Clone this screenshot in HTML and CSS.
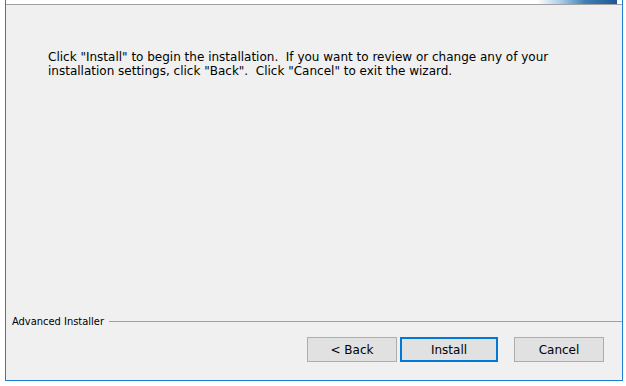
FILE: index.html
```html
<!DOCTYPE html>
<html lang="en">
<head>
  <meta charset="UTF-8">
  <title>Setup</title>
  <link rel="stylesheet" href="styles.css">
</head>
<body>
  <div class="window">
    <div class="header">
      <div class="banner"></div>
    </div>
    <div class="content">
      <p class="message">Click "Install" to begin the installation.&nbsp; If you want to review or change any of your<br>installation settings, click "Back".&nbsp; Click "Cancel" to exit the wizard.</p>
    </div>
    <div class="footer">
      <div class="brand">
        <span>Advanced Installer</span>
        <div class="rule"></div>
      </div>
      <div class="buttons">
        <button class="btn">&lt; Back</button>
        <button class="btn btn-default">Install</button>
        <button class="btn btn-cancel">Cancel</button>
      </div>
    </div>
  </div>
</body>
</html>
```

FILE: styles.css
```css
* {
  box-sizing: border-box;
}
body {
  margin: 0;
  background: #ffffff;
  font-family: "DejaVu Sans", "Liberation Sans", sans-serif;
  font-size: 12px;
  color: #000;
}
.window {
  margin-left: 5px;
  width: 618px;
  height: 381px;
  border-left: 1px solid #1b7fd6;
  border-right: 1px solid #1b7fd6;
  border-bottom: 1px solid #1b7fd6;
  background: #f0f0f0;
  display: flex;
  flex-direction: column;
}
.header {
  height: 5px;
  background: #ffffff;
  border-bottom: 1px solid #a0a0a0;
  display: flex;
  justify-content: flex-end;
}
.banner {
  width: 80px;
  height: 4px;
  margin-right: 5px;
  background: linear-gradient(90deg, #ffffff 0%, #a9cde6 30%, #3f7fb5 60%, #1d5a94 100%);
}
.content {
  flex: 1;
  padding: 45px 20px 0 42px;
}
.message {
  margin: 0;
  line-height: 14px;
}
.footer {
  padding-bottom: 18px;
}
.brand {
  display: flex;
  align-items: center;
  gap: 5px;
  padding-left: 6px;
  height: 13px;
  font-family: "DejaVu Sans Condensed", "Liberation Sans", sans-serif;
  font-size: 11px;
}
.rule {
  flex: 1;
  height: 1px;
  background: #a0a0a0;
}
.buttons {
  display: flex;
  justify-content: flex-end;
  gap: 3px;
  margin-top: 9px;
  padding-right: 18px;
}
.btn {
  width: 90px;
  height: 25px;
  background: #e1e1e1;
  border: 1px solid #adadad;
  font-family: inherit;
  font-size: 12px;
  color: #000;
  padding: 0;
}
.btn-default {
  width: 98px;
  border: 2px solid #0078d7;
}
.btn-cancel {
  margin-left: 13px;
}
```
